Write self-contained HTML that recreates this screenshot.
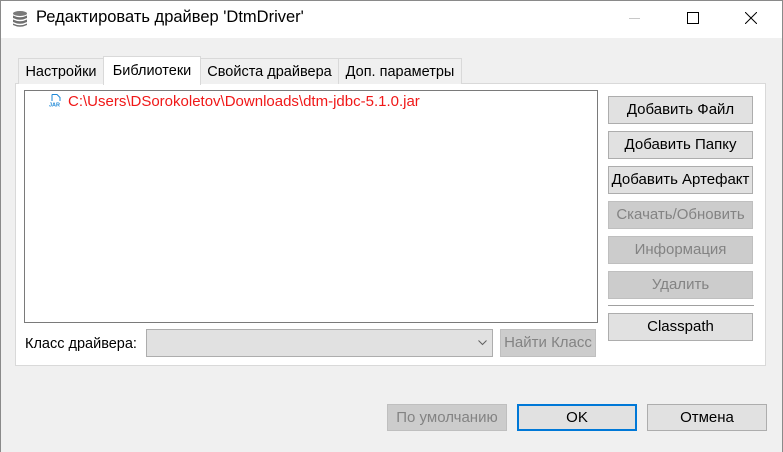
<!DOCTYPE html>
<html><head><meta charset="utf-8"><style>
*{box-sizing:border-box;margin:0;padding:0}
body{width:783px;height:452px;background:#f0f0f0;font-family:"Liberation Sans","DejaVu Sans",sans-serif;font-size:14px;color:#000;position:relative;overflow:hidden}
.a{position:absolute}
.title{left:0;top:0;width:783px;height:38px;background:#fff;border:1px solid #8a8a8a;border-bottom:none}
.btn{position:absolute;background:#e1e1e1;border:1px solid #adadad;text-align:center;font-size:15px;line-height:25px;white-space:nowrap}
.dis{background:#cccccc;border-color:#bfbfbf;color:#838383}
.tab{position:absolute;top:58px;height:26px;background:#f0f0f0;border:1px solid #d9d9d9;border-bottom:none;text-align:center;line-height:26px;font-size:14.5px;white-space:nowrap}
</style></head><body>
<div class="a" style="left:0;top:0;width:1px;height:452px;background:#8a8a8a"></div>
<div class="a" style="right:0;top:0;width:1px;height:452px;background:#8a8a8a"></div>
<div class="a title"></div>
<svg class="a" style="left:11px;top:10px" width="18" height="18" viewBox="0 0 18 18">
<ellipse cx="9" cy="3.5" rx="7" ry="2.5" fill="#7a7a7a"/>
<path d="M2 5.5 Q9 9 16 5.5 V8 Q9 11.5 2 8Z" fill="#6f6f6f"/>
<path d="M2 9.5 Q9 13 16 9.5 V12 Q9 15.5 2 12Z" fill="#6f6f6f"/>
<path d="M2 13.5 Q9 17 16 13.5 V15 Q9 18.5 2 15Z" fill="#6f6f6f"/>
</svg>
<div class="a" style="left:36px;top:8px;font-size:16.5px">Редактировать драйвер 'DtmDriver'</div>
<div class="a" style="left:629px;top:18px;width:11px;height:1px;background:#c8c8c8"></div>
<div class="a" style="left:687px;top:12px;width:12px;height:12px;border:1px solid #000"></div>
<svg class="a" style="left:745px;top:12px" width="12" height="12"><path d="M0 0L12 12M12 0L0 12" stroke="#000" stroke-width="1"/></svg>

<div class="a" style="left:15px;top:83px;width:751px;height:283px;background:#fff;border:1px solid #d9d9d9"></div>
<div class="tab" style="left:18px;width:86px">Настройки</div>
<div class="tab" style="left:200px;width:139px">Свойста драйвера</div>
<div class="tab" style="left:338px;width:124px">Доп. параметры</div>
<div class="tab" style="left:103px;top:56px;height:29px;width:98px;background:#fff;line-height:28px">Библиотеки</div>

<div class="a" style="left:24px;top:90px;width:574px;height:233px;border:1px solid #7a7a7a;background:#fff"></div>
<svg class="a" style="left:49px;top:94px" width="12" height="13" viewBox="0 0 12 13">
<path d="M3 0.5H8L11 3.5V7" fill="none" stroke="#1e88d6"/><path d="M3 0.5V7" stroke="#1e88d6"/>
<text x="0" y="12.5" font-size="5.5" font-family="Liberation Sans" font-weight="bold" fill="#1e88d6">JAR</text>
</svg>
<div class="a" style="left:68px;top:93px;color:#f01818;font-size:15px">C:\Users\DSorokoletov\Downloads\dtm-jdbc-5.1.0.jar</div>

<div class="a" style="left:25px;top:336px;font-size:14.5px">Класс драйвера:</div>
<div class="a" style="left:146px;top:329px;width:347px;height:28px;background:#e1e1e1;border:1px solid #adadad"></div>
<svg class="a" style="left:478px;top:340px" width="9" height="6"><path d="M0.5 0.5L4.5 4.5L8.5 0.5" fill="none" stroke="#606060"/></svg>
<div class="btn dis" style="left:500px;top:329px;width:96px;height:28px;line-height:26px">Найти Класс</div>

<div class="btn" style="left:608px;top:96px;width:145px;height:28px">Добавить Файл</div>
<div class="btn" style="left:608px;top:131px;width:145px;height:28px">Добавить Папку</div>
<div class="btn" style="left:608px;top:166px;width:145px;height:28px">Добавить Артефакт</div>
<div class="btn dis" style="left:608px;top:201px;width:145px;height:28px">Скачать/Обновить</div>
<div class="btn dis" style="left:608px;top:236px;width:145px;height:28px">Информация</div>
<div class="btn dis" style="left:608px;top:271px;width:145px;height:28px">Удалить</div>
<div class="a" style="left:608px;top:305px;width:146px;height:1px;background:#a0a0a0"></div>
<div class="btn" style="left:608px;top:313px;width:145px;height:28px">Classpath</div>

<div class="btn dis" style="left:387px;top:404px;width:120px;height:27px">По умолчанию</div>
<div class="btn" style="left:517px;top:404px;width:120px;height:27px;border:2px solid #0078d7;line-height:23px">OK</div>
<div class="btn" style="left:647px;top:404px;width:120px;height:27px">Отмена</div>
</body></html>
